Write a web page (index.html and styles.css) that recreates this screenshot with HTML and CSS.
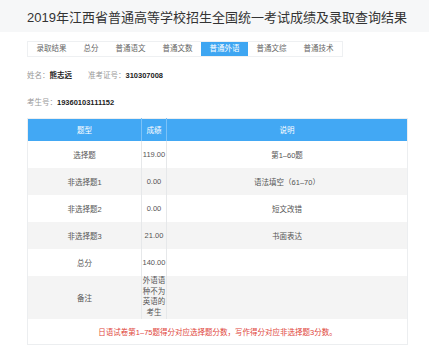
FILE: index.html
```html
<!DOCTYPE html>
<html lang="zh">
<head>
<meta charset="utf-8">
<title>成绩查询结果</title>
<link rel="stylesheet" href="styles.css">
</head>
<body>
<header class="title-bar">
  <h1 class="title">2019年江西省普通高等学校招生全国统一考试成绩及录取查询结果</h1>
</header>
<main class="content">
  <nav class="tabs">
    <span class="tab">录取结果</span>
    <span class="tab">总分</span>
    <span class="tab">普通语文</span>
    <span class="tab">普通文数</span>
    <span class="tab active">普通外语</span>
    <span class="tab">普通文综</span>
    <span class="tab">普通技术</span>
  </nav>
  <div class="info">
    <span class="field"><span class="label">姓名：</span><span class="value">熊志远</span></span>
    <span class="field"><span class="label">准考证号：</span><span class="value">310307008</span></span>
  </div>
  <div class="info info-2">
    <span class="field"><span class="label">考生号：</span><span class="value">19360103111152</span></span>
  </div>
  <table class="scores">
    <colgroup>
      <col class="c1"><col class="c2"><col class="c3">
    </colgroup>
    <thead>
      <tr><th>题型</th><th>成绩</th><th>说明</th></tr>
    </thead>
    <tbody>
      <tr><td>选择题</td><td>119.00</td><td>第1–60题</td></tr>
      <tr class="alt"><td>非选择题1</td><td>0.00</td><td>语法填空（61–70）</td></tr>
      <tr><td>非选择题2</td><td>0.00</td><td>短文改错</td></tr>
      <tr class="alt"><td>非选择题3</td><td>21.00</td><td>书面表达</td></tr>
      <tr><td>总分</td><td>140.00</td><td></td></tr>
      <tr class="alt note-row"><td>备注</td><td class="wrap">外语语种不为英语的考生</td><td></td></tr>
      <tr class="red-row"><td colspan="3">日语试卷第1–75题得分对应选择题分数，写作得分对应非选择题3分数。</td></tr>
    </tbody>
  </table>
</main>
</body>
</html>
```
FILE: styles.css
```css
* { box-sizing: border-box; }
body {
  margin: 0;
  background: #fff;
  font-family: "Liberation Sans", "Noto Sans CJK SC", sans-serif;
  color: #333;
}
.title-bar {
  background: #f6f7f8;
  height: 32px;
  display: flex;
  align-items: center;
  padding-left: 27px;
}
.title {
  margin: 0;
  font-size: 13px;
  font-weight: normal;
  color: #333;
  white-space: nowrap;
}
.content {
  padding: 9px 22px 0 27px;
}
.tabs {
  display: flex;
  width: max-content;
  border: 1px solid #eef0f2;
}
.tab {
  font-size: 7.5px;
  line-height: 14px;
  padding: 0 8.5px;
  color: #666;
  background: #fff;
}
.tab.active {
  background: #3ea6f2;
  color: #fff;
}
.info {
  display: flex;
  gap: 16px;
  margin-top: 14px;
  font-size: 7.5px;
  line-height: 10px;
}
.info-2 { margin-top: 17px; }
.label { color: #999; }
.value { color: #222; font-weight: bold; }
.scores {
  margin-top: 10px;
  width: 380px;
  table-layout: fixed;
  border-collapse: collapse;
  font-size: 7.5px;
  color: #555;
  border: 1px solid #eceef0;
}
.c1 { width: 114px; }
.c2 { width: 25px; }
.c3 { width: 241px; }
.scores th {
  background: #42a8f4;
  color: #fff;
  font-weight: normal;
  height: 22px;
  padding: 0;
  text-align: center;
  border-right: 1px solid #7cc2f7;
}
.scores th:last-child { border-right: none; }
.scores td {
  height: 27px;
  padding: 0;
  text-align: center;
  border-right: 1px solid #e6e8ea;
  white-space: nowrap;
}
.scores td:last-child { border-right: none; }
.scores tr.alt td { background: #f4f4f4; }
.scores tr.note-row td { height: 43px; }
.scores td.wrap {
  white-space: normal;
  line-height: 10.5px;
  padding: 0;
}
.scores tr.red-row td {
  color: #e0443a;
  border-right: none;
  height: 26px;
}
```
